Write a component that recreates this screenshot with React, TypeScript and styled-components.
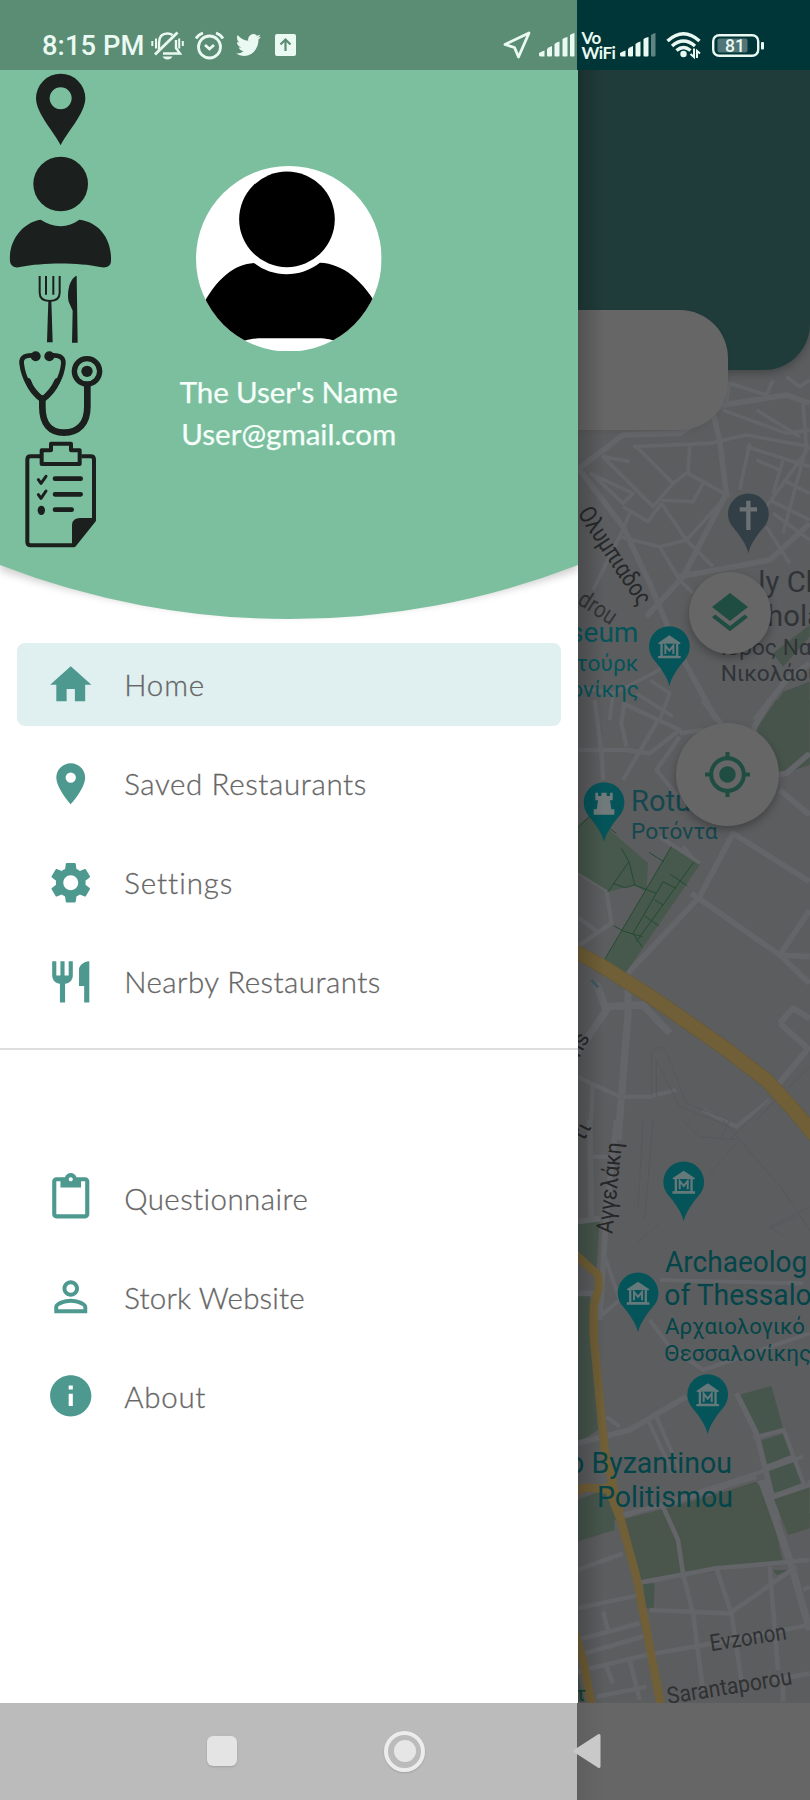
import React from 'react';
import styled, { createGlobalStyle } from 'styled-components';
import {
  MdHome,
  MdPlace,
  MdSettings,
  MdRestaurant,
  MdContentPaste,
  MdPersonOutline,
  MdInfo,
  MdLayers,
  MdMyLocation,
} from 'react-icons/md';

const GlobalStyle = createGlobalStyle`
  * { box-sizing: border-box; }
  body { margin: 0; background: #5c5d5f; }
`;

const Screen = styled.div`
  position: relative;
  width: 810px;
  height: 1800px;
  display: flex;
  overflow: hidden;
  font-family: Roboto, 'Liberation Sans', sans-serif;
`;

/* ---------- drawer ---------- */

const Drawer = styled.nav`
  width: 577.5px;
  flex: none;
  background: #fff;
  display: flex;
  flex-direction: column;
`;

const DrawerHeader = styled.header`
  position: relative;
  height: 627px;
  flex: none;
  padding-top: 70px;
  display: grid;
  grid-template-columns: 121px 1fr 121px;
  align-items: start;
`;

const HeaderShape = styled.svg`
  position: absolute;
  left: 0;
  top: 0;
`;

const StickerColumn = styled.div`
  position: relative;
  display: flex;
  flex-direction: column;
  svg {
    display: block;
    width: 121px;
    flex: none;
  }
`;

const Profile = styled.div`
  position: relative;
  display: flex;
  flex-direction: column;
  align-items: center;
  padding-top: 95.6px;
`;

const Avatar = styled.svg`
  width: 185.6px;
  height: 185.6px;
  display: block;
  margin-bottom: 20px;
`;

const ProfileLine = styled.div<{ $spacing: number }>`
  font-family: Lato, 'Open Sans', sans-serif;
  font-weight: 400;
  font-size: 29.5px;
  line-height: 42px;
  letter-spacing: ${(p) => p.$spacing}px;
  color: #f6fffa;
  -webkit-text-stroke: 0.25px #f6fffa;
  white-space: nowrap;
`;

const MenuGroup = styled.ul`
  list-style: none;
  margin: 0;
  padding: 16.3px 16.5px;
  display: flex;
  flex-direction: column;
  gap: 16.5px;
`;

const MenuItem = styled.li<{ $active?: boolean }>`
  height: 82.5px;
  border-radius: 8px;
  background: ${(p) => (p.$active ? '#e0f0f0' : 'transparent')};
  display: flex;
  align-items: center;
  padding-left: 29.2px;
  svg {
    width: 49.5px;
    height: 49.5px;
    color: #4d9990;
    flex: none;
  }
`;

const MenuLabel = styled.span<{ $spacing: number }>`
  margin-left: 29px;
  padding-top: 1px;
  font-family: Lato, 'Open Sans', sans-serif;
  font-weight: 300;
  font-size: 29.5px;
  line-height: 36px;
  letter-spacing: ${(p) => p.$spacing}px;
  color: #666;
  -webkit-text-stroke: 0.3px #666;
  white-space: nowrap;
`;

const Divider = styled.hr`
  margin: 8.5px 0 91px;
  border: 0;
  height: 2px;
  background: #dedede;
`;

/* ---------- map behind the scrim ---------- */

const MapPane = styled.main`
  position: relative;
  flex: 1;
  background: #5c5d5f;
  overflow: hidden;
  &::after {
    content: '';
    position: absolute;
    inset: 0 auto 0 0;
    width: 26px;
    background: linear-gradient(90deg, rgba(0, 0, 0, 0.2), rgba(0, 0, 0, 0));
  }
`;

const MapDrawing = styled.svg`
  position: absolute;
  left: 0;
  top: 0;
`;

const AppBar = styled.div`
  position: relative;
  height: 370px;
  border-bottom-right-radius: 46px;
  background: #203c3a;
  box-shadow: 0 3px 8px rgba(0, 0, 0, 0.25);
`;

const SearchCard = styled.div`
  position: relative;
  width: 150px;
  height: 120px;
  margin-top: -60px;
  border-radius: 0 48px 48px 0;
  background: #666;
  box-shadow: 0 2px 5px rgba(0, 0, 0, 0.06);
`;

const Fab = styled.button<{ $size: number; $x: number; $y: number; $icon: number }>`
  position: absolute;
  left: ${(p) => p.$x - p.$size / 2}px;
  top: ${(p) => p.$y - p.$size / 2}px;
  width: ${(p) => p.$size}px;
  height: ${(p) => p.$size}px;
  border: 0;
  padding: 0;
  border-radius: 50%;
  display: flex;
  align-items: center;
  justify-content: center;
  background: #666;
  color: #1f4d42;
  box-shadow: 0 4px 9px rgba(0, 0, 0, 0.28);
  svg {
    width: ${(p) => p.$icon}px;
    height: ${(p) => p.$icon}px;
  }
`;

/* ---------- system bars ---------- */

const StatusBar = styled.div`
  position: absolute;
  left: 0;
  top: 0;
  width: 810px;
  height: 70px;
  padding: 20px 45px 0 42px;
  display: flex;
  justify-content: space-between;
  align-items: center;
  background: linear-gradient(90deg, #5b8c74 577.5px, #003637 577.5px);
  color: #eafaf3;
`;

const StatusGroup = styled.div`
  display: flex;
  align-items: center;
  height: 50px;
  svg {
    display: block;
    flex: none;
    overflow: visible;
  }
`;

const Clock = styled.span`
  width: 102px;
  margin-right: 7px;
  padding-top: 2px;
  font-weight: 500;
  font-size: 27.3px;
  letter-spacing: 0.1px;
  white-space: nowrap;
`;

const Spacer = styled.i<{ $w: number }>`
  width: ${(p) => p.$w}px;
  flex: none;
`;

const CarrierTag = styled.span`
  width: 32px;
  font-family: Lato, sans-serif;
  font-weight: 700;
  font-size: 17px;
  line-height: 15.5px;
  white-space: nowrap;
  letter-spacing: -0.5px;
`;

const NavBar = styled.div`
  position: absolute;
  left: 0;
  bottom: 0;
  width: 810px;
  height: 97.5px;
  padding: 0 208px 0 206.5px;
  display: flex;
  align-items: center;
  justify-content: space-between;
  background: linear-gradient(90deg, #bbb 577.5px, #5f5f5f 577.5px, #666 604px);
`;

const RecentsKey = styled.div`
  width: 30px;
  height: 30px;
  border-radius: 6px;
  background: #e4e4e4;
  box-shadow: 0 1px 2px rgba(0, 0, 0, 0.15);
`;

const HomeKey = styled.div`
  width: 41px;
  height: 41px;
  border-radius: 50%;
  border: 4px solid #ececec;
  display: flex;
  align-items: center;
  justify-content: center;
  box-shadow: 0 1px 2px rgba(0, 0, 0, 0.15);
  &::after {
    content: '';
    width: 22px;
    height: 22px;
    border-radius: 50%;
    background: #e6e6e6;
  }
`;

/* ---------- drawings ---------- */

const INK = '#1b1f1d';

const Stickers = () => (
  <StickerColumn>
    <svg viewBox="0 210 363 250" height={83.33} fill={INK}>
      <path
        fillRule="evenodd"
        d="M182 436 C165 400 108 340 108 295 A74 74 0 0 1 256 295 C256 340 199 400 182 436Z M182 262 A33 33 0 1 0 182 328 A33 33 0 1 0 182 262Z"
      />
    </svg>
    <svg viewBox="0 460 363 350" height={116.67} fill={INK}>
      <circle cx="182" cy="553" r="82" />
      <path d="M122 660 C70 668 25 720 30 785 C32 800 45 806 60 802 C130 788 235 788 300 802 C320 806 332 800 333 785 C336 720 300 668 238 660 C205 686 160 686 122 660Z" />
    </svg>
    <svg viewBox="0 30 363 230" height={76.67} fill="none" stroke={INK}>
      <path d="M119 48V98Q119 122 149 123Q179 122 179 98V48" strokeWidth="6" />
      <path d="M138 48V104M160 48V104" strokeWidth="6" />
      <path d="M145 122H154L158 247H141Z" fill={INK} stroke="none" />
      <path d="M230 47C204 58 200 110 208 130L218 152L216 248H233Z" fill={INK} stroke="none" />
    </svg>
    <svg viewBox="0 260 363 275" height={91.67} fill="none" stroke={INK} strokeLinecap="round">
      <circle cx="107" cy="288" r="15" fill={INK} stroke="none" />
      <circle cx="148" cy="288" r="15" fill={INK} stroke="none" />
      <path d="M107 286C78 282 62 290 65 310C70 350 85 385 127 418C168 385 186 350 190 310C192 290 176 282 148 286" strokeWidth="14" />
      <path d="M84 362C92 385 110 405 127 418C145 405 162 385 172 362" strokeWidth="18" />
      <path d="M127 415V440C127 490 150 517 192 517C235 517 262 490 262 440V378" strokeWidth="20" />
      <circle cx="261" cy="333" r="38" strokeWidth="16" />
      <circle cx="261" cy="333" r="17" fill={INK} stroke="none" />
    </svg>
    <svg viewBox="0 535 363 345" height={115} fill="none" stroke={INK} strokeLinejoin="round">
      <path d="M120 590H92Q82 590 82 600V847Q82 857 92 857H222L282 782V600Q282 590 272 590H244" strokeWidth="12" />
      <path d="M125 613V572H153V552H213V572H239V613Z" strokeWidth="12" />
      <path d="M165 657H242M165 704H242M165 750H215" strokeWidth="14" strokeLinecap="round" />
      <path d="M115 660L123 671L138 650M115 705L123 716L138 694" strokeWidth="9" strokeLinecap="round" />
      <ellipse cx="124" cy="752" rx="11" ry="14" fill={INK} stroke="none" />
      <path d="M216 860V795Q218 775 240 775H287Z" fill={INK} stroke="none" />
    </svg>
  </StickerColumn>
);

const ProfilePicture = () => (
  <Avatar viewBox="588 497 557 557">
    <clipPath id="round">
      <circle cx="866.5" cy="775.5" r="278.5" />
    </clipPath>
    <g clipPath="url(#round)">
      <rect x="588" y="497" width="557" height="557" fill="#fff" />
      <circle cx="861" cy="657" r="143.5" />
      <path d="M762 788C705 792 650 830 600 930V1060L700 1034C735 1018 755 1014 790 1014H945C975 1014 990 1016 1010 1024L1140 1060V930C1090 840 1030 790 960 787C900 833 820 833 762 788Z" />
    </g>
  </Avatar>
);

const Signal = ({ faded }: { faded?: boolean }) => (
  <svg width="36" height="24" viewBox="0 0 36 24" fill="currentColor">
    <path d="M0 20Q3 18 5.500 17.500V23.500H2Q0 23.500 0 22Z" />
    <path d="M8 16Q10 14 13 13V22.500Q13 23.500 12 23.500H9Q8 23.500 8 22.500Z" />
    <path d="M15.500 11Q17.500 9 20.500 8.500V22.500Q20.500 23.500 19.500 23.500H16.500Q15.500 23.500 15.500 22.500Z" />
    <path d="M23.500 6Q25.500 4.500 28.500 4V22.500Q28.500 23.500 27.500 23.500H24.500Q23.500 23.500 23.500 22.500Z" />
    <path opacity={faded ? 0.4 : 1} d="M31 2Q33 .5 35.500 0V22.500Q35.500 23.500 34.500 23.500H32Q31 23.500 31 22.500Z" />
  </svg>
);

const SystemStatus = () => (
  <StatusBar>
    <StatusGroup>
      <Clock>8:15 PM</Clock>
      <svg width="33" height="29" viewBox="0 0 33 29" fill="none" stroke="currentColor" strokeWidth="2.4">
        <path d="M8 19.500V12Q8 2.500 16.500 2.500Q19.500 2.500 21.500 4M25 9V17L29 22.500H12" />
        <path d="M4 23.500L26.500 1.500" strokeWidth="2.800" />
        <path d="M1.300 10V15M5 7.500V17.500M28.200 7.500V17.500M31.800 10V15" strokeWidth="2" />
        <path d="M11.500 25.500H21.500Q20 28.500 16.500 28.500Q13 28.500 11.500 25.500Z" fill="currentColor" stroke="none" />
      </svg>
      <Spacer $w={11} />
      <svg width="29" height="27" viewBox="0 0 29 27" fill="none" stroke="currentColor" strokeWidth="2.800">
        <circle cx="14.500" cy="15" r="11" />
        <path d="M1 6.500Q3.500 2.500 8 1M28 6.500Q25.500 2.500 21 1" />
        <path d="M10 13L14.500 17L19 13" />
      </svg>
      <Spacer $w={12} />
      <svg width="25" height="22" viewBox="0 2.200 24 19.600" preserveAspectRatio="none" fill="currentColor">
        <path d="M23.953 4.570a10 10 0 01-2.825.775 4.958 4.958 0 002.163-2.723c-.951.555-2.005.959-3.127 1.184a4.920 4.920 0 00-8.384 4.482C7.690 8.095 4.067 6.130 1.640 3.162a4.822 4.822 0 00-.666 2.475c0 1.710.870 3.213 2.188 4.096a4.904 4.904 0 01-2.228-.616v.060a4.923 4.923 0 003.946 4.827 4.996 4.996 0 01-2.212.085 4.936 4.936 0 004.604 3.417 9.867 9.867 0 01-6.102 2.105c-.390 0-.779-.023-1.170-.067a13.995 13.995 0 007.557 2.209c9.053 0 13.998-7.496 13.998-13.985 0-.210 0-.420-.015-.630A9.935 9.935 0 0024 4.590z" />
      </svg>
      <Spacer $w={14} />
      <svg width="21" height="22" viewBox="0 0 21 22">
        <rect width="21" height="22" rx="2" fill="currentColor" />
        <path d="M10.500 17V6M5.500 10.500L10.500 5.500L15.500 10.500" fill="none" stroke="#5b8c74" strokeWidth="2.200" />
      </svg>
    </StatusGroup>
    <StatusGroup>
      <svg width="28" height="28" viewBox="0 0 28 28" fill="none" stroke="currentColor" strokeWidth="2.800" strokeLinejoin="round">
        <path d="M26 2L15.500 26L11.500 16.500L2 13.500Z" />
      </svg>
      <Spacer $w={8.5} />
      <Signal />
      <Spacer $w={6.5} />
      <CarrierTag>
        Vo
        <br />
        WiFi
      </CarrierTag>
      <Spacer $w={6.5} />
      <Signal faded />
      <Spacer $w={10} />
      <svg width="35" height="26" viewBox="0 0 35 26" fill="none" stroke="currentColor" strokeWidth="3.400">
        <path d="M1.500 9Q17.500 -5.500 33.500 9M6 14Q17.500 4 29 14M10.500 18.500Q17.500 12.500 24.500 18.500" />
        <circle cx="17.500" cy="22" r="3.200" fill="currentColor" stroke="none" />
        <path d="M28 16.500V25L24.500 22M31 26V19L34 21.500" strokeWidth="2" />
      </svg>
      <Spacer $w={11} />
      <svg width="53" height="23" viewBox="0 0 53 23">
        <rect x="1.200" y="1.200" width="45" height="20.600" rx="6" fill="none" stroke="currentColor" strokeWidth="2.400" />
        <rect x="5.500" y="4.500" width="30" height="14" rx="2" fill="#fff" opacity=".32" />
        <rect x="49" y="8" width="3" height="7.500" rx="1" fill="currentColor" />
        <text x="23" y="17.700" fontSize="17.500" fontWeight="500" textAnchor="middle" fill="currentColor">
          81
        </text>
      </svg>
    </StatusGroup>
  </StatusBar>
);

const TEAL = '#04545a';
const GLYPH = '#65797b';

const PinShape = ({ fill }: { fill: string }) => (
  <path fill={fill} d="M0 118C-6 92 -24 66 -44 42A61 61 0 1 1 44 42C24 66 6 92 0 118Z" />
);

const MuseumPin = ({ x, y }: { x: number; y: number }) => (
  <g transform={`translate(${x} ${y})`}>
    <PinShape fill={TEAL} />
    <path fill={GLYPH} d="M-33 -12L0 -34L33 -12V-8H27V28H34V35H-34V28H-27V-8H-33Z" />
    <rect x="-20" y="-9" width="40" height="36" fill={TEAL} />
    <path d="M-12 22V-3L0 12L12 -3V22" fill="none" stroke={GLYPH} strokeWidth="6" />
  </g>
);

const CityMap = () => (
  <MapDrawing width="232.5" height="1800" viewBox="578.3 0 232.500 1800" fontFamily="Roboto, sans-serif">
    {/* city centre */}
    <g transform="translate(570 280) scale(.33333)" fill="none" stroke="#636568" strokeLinejoin="round">
      <path fill="#47544b" stroke="none" d="M585 1320L640 1235L720 1205V1320Z M610 1120L720 1035V1070L640 1160Z" />
      <g strokeWidth="17">
        <path d="M22 570L160 465L330 460L460 375L650 345L720 370" />
        <path d="M430 400L450 480L470 640L340 890L230 1010" />
        <path d="M22 560L160 740L240 910L320 1100L440 1320" />
        <path d="M720 730L600 840L440 870L325 890" />
        <path d="M555 1320L650 1200L720 1150" />
      </g>
      <g strokeWidth="11">
        <path d="M190 500L420 490L530 465L720 500M360 500L355 575L310 610L200 500M355 580L480 650M310 610L250 680L100 530L180 545" />
        <path d="M60 580L190 640L160 670L75 590M270 660L370 665L400 610M275 670L350 780L430 860M350 780L470 650" />
        <path d="M150 770L270 800L350 780M180 700L150 770L70 930M160 680L235 725L275 670M270 800L330 900" />
        <path d="M540 490L510 630M530 500L720 560M720 500L590 680M460 390L650 460L720 450M610 300L590 345L480 310L470 370" />
        <path d="M640 600L720 640M600 660L720 720M700 370L710 500L640 760M590 740L660 850M610 700L720 780M640 540L610 640" />
        <path d="M560 390L690 470M650 290L690 320L720 300M560 540L630 570" />
        <path d="M240 1200L300 1240L270 1320M22 1220L130 1240L250 1180L330 1130M130 1240L120 1320M200 1240L310 1310M330 900L370 940" />
      </g>
    </g>
    {/* campus */}
    <g transform="translate(570 700) scale(.33333)" fill="none" strokeLinejoin="round">
      <path fill="#47544b" d="M620 0H720V195L625 225L560 85Z" />
      <g stroke="#636568" strokeWidth="13">
        <path d="M22 150H170L240 160L330 90L160 10M165 0L155 70L170 140M75 0L95 160L100 240M265 60L160 240M330 110L260 210L350 320M330 100L400 90" />
        <path d="M400 0L460 80M600 0L550 90M720 160L650 220L580 230M630 270L720 345M390 590L165 830M390 590L490 400L720 545M365 580L630 765L720 850M630 765L720 630M630 765L720 770" strokeWidth="17" />
        <path d="M22 515L110 570L125 670L22 740M22 650L90 700M270 410L390 490M340 440L380 490" />
        <path d="M720 1040L620 1160M630 970L670 925L720 955M630 970L720 1050" strokeWidth="18" />
        <path d="M80 850L110 930L22 1060M110 920L220 915L300 1000M175 870V940L145 1320" strokeWidth="22" />
        <path d="M22 1130L150 1190L240 1190L320 1170M70 1150L60 1320M400 1230L500 1280L600 1200" />
      </g>
      <path stroke="#57585b" strokeWidth="3" d="M245 1190V1060Q260 1025 290 1055L350 1210L480 1260L450 1320M260 1190V1080L330 1220L470 1275M480 1320L600 1200M720 1100L560 1260" />
      <path fill="#47584c" d="M22 380L60 345L120 390L235 490L230 575L190 555L120 575L22 515Z M305 440L390 495L160 830L100 790Z" />
      <path stroke="#234a32" strokeWidth="3" d="M22 385L65 345M120 385L140 400M155 445L178 485L195 555L165 563L130 550M178 485L115 575M195 555L260 580M305 440L98 790M238 457L282 485M372 487L200 725M300 522L352 557M280 545L318 565M280 545L190 700L218 742M255 600L280 615M225 648L268 678M132 677L160 693L218 710" />
      <path stroke="#705f37" strokeWidth="42" d="M0 745L110 805L250 895L460 1040L590 1140L665 1222L760 1335" />
      <path stroke="#655939" strokeWidth="3" d="M22 735L110 782L260 875L475 1025L605 1125L680 1207L720 1252M22 780L100 825L235 910L450 1060L580 1160L650 1237L720 1322" />
      <path stroke="#3d5860" strokeWidth="8" d="M65 840L85 862" />
    </g>
    {/* museums */}
    <g transform="translate(570 1120) scale(.33333)" fill="none" strokeLinejoin="round">
      <path fill="#47564d" d="M22 305H90L80 450L22 410Z M22 525H60L85 930L22 970Z M495 828L605 798L640 925L555 945Z M560 965L645 940L668 1010L582 1035Z M585 1050L668 1020L700 1095L608 1120Z M615 1135L720 1100V1200H640Z M22 1140L120 1110L150 1200H22Z" />
      <path fill="#4a5349" d="M200 1200L560 1085L590 1200Z" />
      <g stroke="#636568">
        <path strokeWidth="17" d="M140 0L110 280L90 600M60 0L65 290M22 305L90 295M22 970L180 930L350 830M22 520H90M500 820L560 940L625 1200" />
        <path strokeWidth="12" d="M105 410L150 540L90 590M240 600L300 680L400 750L720 640M270 480L700 490M70 110H120M160 1190L560 1060L700 1010M110 890L150 920M235 900L310 1060M260 890L330 1050M550 955L640 930M580 1045L668 1010M605 1130L700 1095M640 925L720 1140M720 1080V1180" />
      </g>
      <path stroke="#57585b" strokeWidth="3" d="M220 0L205 270M250 0L225 300M340 0L390 50L510 60L460 0M510 60L420 160M510 60L640 210L720 330M590 330L680 290M640 350L600 320L720 260M270 310L200 370" />
      <path stroke="#705f37" strokeWidth="25" d="M15 402L85 465L88 500L72 560V650L88 820L105 990L155 1200" />
      <path stroke="#705f37" strokeWidth="18" d="M15 1120L50 1105L105 1110" />
    </g>
    {/* southern blocks */}
    <g transform="translate(570 1480) scale(.33333)" fill="none" strokeLinejoin="round">
      <path fill="#47564d" d="M22 60L130 20L135 150L22 185Z M220 310H255L252 385H228Z M610 270H660L620 285Z M22 570L45 665H22Z" />
      <path fill="#4a554b" d="M160 118L290 85L560 10L590 30L640 245L210 308Z M610 50L720 20V145L655 165Z" />
      <g stroke="#636568">
        <path strokeWidth="22" d="M575 0L600 70L660 240L720 450" />
        <path strokeWidth="14" d="M155 105L280 75L560 -10M280 80L325 180L340 280L370 400L400 630M210 308L440 265L720 240M22 385L210 345M240 390L480 400L680 260M22 270L160 220M440 265L485 400L515 600M600 260L625 570M22 480L210 430M30 525L235 465M22 575L230 525L430 490L720 435M100 395L115 450M110 560L130 610M180 540L210 660M80 650L230 620M600 55L720 15M700 330L720 320M610 600L720 580M640 600V665" />
      </g>
      <path stroke="#705f37" strokeWidth="25" d="M15 30L50 22L110 28M110 10L155 125L200 290L225 420L272 670M10 440L40 540L65 670" />
    </g>

    <g transform="translate(570 280) scale(.33333)">
      <MuseumPin x={299} y={1100} />
      <g transform="translate(536 702)">
        <PinShape fill="#323f46" />
        <path d="M0 -40V48M-26 -14H26" stroke="#6c7173" strokeWidth="13" />
      </g>
      <g fill="#26292a">
        <text transform="translate(22 700) rotate(56.5)" fontSize="74" textLength="338" lengthAdjust="spacingAndGlyphs">Ολυμπιαδος</text>
        <text transform="translate(20 970) rotate(33)" fontSize="72" textLength="122" lengthAdjust="spacingAndGlyphs" fill="#323435">drou</text>
      </g>
      <g fill={TEAL} textAnchor="end">
        <text x="206" y="1085" fontSize="84">Museum</text>
        <text x="206" y="1172" fontSize="68">Ατατούρκ</text>
        <text x="208" y="1252" fontSize="68">Θεσσαλονίκης</text>
      </g>
      <g fill="#303438">
        <text x="566" y="935" fontSize="88">ly Ch</text>
        <text x="592" y="1037" fontSize="88">hola</text>
        <text x="453" y="1124" fontSize="68">Ιερός Να</text>
        <text x="453" y="1204" fontSize="68">Νικολάου</text>
      </g>
    </g>
    <g transform="translate(570 700) scale(.33333)">
      <g transform="translate(103 308)">
        <PinShape fill={TEAL} />
        <path fill="#707a7a" d="M-26 -30H-18V-20H-8V-30H8V-20H18V-30H26V-7H18L22 20H31V36H-31V20H-22L-18 -7H-26Z" />
      </g>
      <text x="184" y="334" fontSize="87" fill="#15474e">Rotunda</text>
      <text x="184" y="418" fontSize="68" fill="#15474e" textLength="260" lengthAdjust="spacingAndGlyphs">Ροτόντα</text>
      <g fill="#252728" fontSize="66">
        <text transform="translate(28 1075) rotate(-62)">ns</text>
        <text transform="translate(40 1330) rotate(-62)">τι</text>
      </g>
    </g>
    <g transform="translate(570 1120) scale(.33333)">
      <MuseumPin x={342} y={186} />
      <MuseumPin x={205} y={519} />
      <MuseumPin x={414} y={824} />
      <text transform="translate(128 342) rotate(-84)" fontSize="70" fill="#252728" textLength="274" lengthAdjust="spacingAndGlyphs">Αγγελάκη</text>
      <g fill="#044549">
        <text x="286" y="455" fontSize="89" textLength="427" lengthAdjust="spacingAndGlyphs">Archaeolog</text>
        <text x="284" y="556" fontSize="89" textLength="442" lengthAdjust="spacingAndGlyphs">of Thessalo</text>
        <text x="286" y="642" fontSize="68" textLength="420" lengthAdjust="spacingAndGlyphs">Αρχαιολογικό</text>
        <text x="284" y="723" fontSize="68" textLength="440" lengthAdjust="spacingAndGlyphs">Θεσσαλονίκης</text>
        <text x="-5" y="1058" fontSize="89" textLength="492" lengthAdjust="spacingAndGlyphs">o Byzantinou</text>
        <text x="82" y="1160" fontSize="89" textLength="408" lengthAdjust="spacingAndGlyphs">Politismou</text>
      </g>
    </g>
    <g transform="translate(570 1480) scale(.33333)" fill="#2f3132" fontSize="70">
      <text transform="translate(424 514) rotate(-9)" textLength="232" lengthAdjust="spacingAndGlyphs">Evzonon</text>
      <text transform="translate(296 672) rotate(-9)" textLength="378" lengthAdjust="spacingAndGlyphs">Sarantaporou</text>
      <text x="18" y="664" fontSize="60" fill="#124030">τ</text>
    </g>
  </MapDrawing>
);

/* ---------- content ---------- */

type Item = { label: string; Icon: React.ComponentType; spacing: number; active?: boolean };

const mainItems: Item[] = [
  { label: 'Home', Icon: MdHome, spacing: 0.85, active: true },
  { label: 'Saved Restaurants', Icon: MdPlace, spacing: 0.62 },
  { label: 'Settings', Icon: MdSettings, spacing: 0.95 },
  { label: 'Nearby Restaurants', Icon: MdRestaurant, spacing: 0.45 },
];

const extraItems: Item[] = [
  { label: 'Questionnaire', Icon: MdContentPaste, spacing: 0.42 },
  { label: 'Stork Website', Icon: MdPersonOutline, spacing: 0.2 },
  { label: 'About', Icon: MdInfo, spacing: 0.75 },
];

const Menu = ({ items }: { items: Item[] }) => (
  <MenuGroup>
    {items.map(({ label, Icon, spacing, active }) => (
      <MenuItem key={label} $active={active}>
        <Icon />
        <MenuLabel $spacing={spacing}>{label}</MenuLabel>
      </MenuItem>
    ))}
  </MenuGroup>
);

export default function App() {
  return (
    <Screen>
      <GlobalStyle />
      <Drawer>
        <DrawerHeader>
          <HeaderShape width="578" height="640" viewBox="0 0 578 640">
            <defs>
              <filter id="soft" x="-10%" y="-10%" width="120%" height="120%">
                <feGaussianBlur stdDeviation="4" />
              </filter>
            </defs>
            <path d="M0 480V570Q289 660 578 570V480Z" fill="#000" opacity=".2" filter="url(#soft)" />
            <path d="M0 0H578V565A800 800 0 0 1 0 565Z" fill="#7cbf9f" />
          </HeaderShape>
          <Stickers />
          <Profile>
            <ProfilePicture />
            <ProfileLine $spacing={-0.1}>The User's Name</ProfileLine>
            <ProfileLine $spacing={0}>User@gmail.com</ProfileLine>
          </Profile>
        </DrawerHeader>
        <Menu items={mainItems} />
        <Divider />
        <Menu items={extraItems} />
      </Drawer>
      <MapPane>
        <CityMap />
        <AppBar />
        <SearchCard />
        <Fab $size={82} $x={152.5} $y={612.5} $icon={48}>
          <MdLayers />
        </Fab>
        <Fab $size={103} $x={150.2} $y={774.3} $icon={49}>
          <MdMyLocation />
        </Fab>
      </MapPane>
      <SystemStatus />
      <NavBar>
        <RecentsKey />
        <HomeKey />
        <svg width="29" height="36" viewBox="0 0 29 36">
          <path d="M2 18L26 2.500V33.500Z" fill="#c9c9c9" stroke="#c9c9c9" strokeWidth="3" strokeLinejoin="round" />
        </svg>
      </NavBar>
    </Screen>
  );
}
